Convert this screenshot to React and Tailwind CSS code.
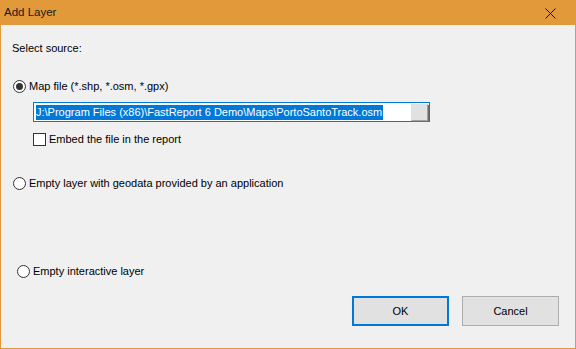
import React from 'react';

const Radio = ({ checked }) => (
  <span className="w-[13px] h-[13px] rounded-full border border-[#333333] bg-white flex items-center justify-center shrink-0">
    {checked && <span className="w-[7px] h-[7px] rounded-full bg-[#333333]" />}
  </span>
);

const App = () => {
  return (
    <div className="w-[576px] h-[349px] flex flex-col bg-[#e1993a] text-[11px] text-black" style={{ fontFamily: '"Liberation Sans", Arial, sans-serif' }}>
      {/* Title bar */}
      <div className="h-[25px] flex items-center justify-between pl-[4px] pr-[20px] shrink-0">
        <span className="text-[11.5px] text-[#1a1a1a] leading-none">Add Layer</span>
        <svg width="11" height="11" viewBox="0 0 11 11" className="mt-[1px]">
          <path d="M0.5 0.5 L10.5 10.5 M10.5 0.5 L0.5 10.5" stroke="#111" strokeWidth="1" />
        </svg>
      </div>

      {/* Body */}
      <div className="flex-1 mx-[1px] mb-[1px] bg-[#f0f0f0] flex flex-col">
        <div className="pl-[11px] pt-[16px] leading-[14px]">Select source:</div>

        <div className="flex items-center gap-[3px] pl-[12px] mt-[24px] h-[14px]">
          <Radio checked />
          <span>Map file (*.shp, *.osm, *.gpx)</span>
        </div>

        <div className="ml-[32px] mt-[9px] w-[397px] h-[20px] border border-[#0078d7] bg-white flex items-center pl-[2px] pr-[1px]">
          <span className="bg-[#0078d7] text-white h-[15px] leading-[15px] pr-[1px] whitespace-nowrap">J:\Program Files (x86)\FastReport 6 Demo\Maps\PortoSantoTrack.osm</span>
          <span className="ml-auto w-[17px] h-[17px] bg-[#e1e1e1] border border-[#e1e1e1] border-r-[#a0a0a0] border-b-[#a0a0a0] shadow-[1px_1px_0_#6d6d6d]" />
        </div>

        <div className="flex items-center gap-[3px] pl-[32px] mt-[10px] h-[14px]">
          <span className="w-[13px] h-[13px] border border-[#333333] bg-white shrink-0" />
          <span>Embed the file in the report</span>
        </div>

        <div className="flex items-center gap-[3px] pl-[12px] mt-[30px] h-[14px]">
          <Radio />
          <span>Empty layer with geodata provided by an application</span>
        </div>

        <div className="flex items-center gap-[3px] pl-[16px] mt-[74px] h-[14px]">
          <Radio />
          <span>Empty interactive layer</span>
        </div>

        <div className="flex justify-end gap-[13px] pr-[16px] mt-[18px]">
          <button className="w-[97px] h-[30px] border-2 border-[#0078d7] bg-[#e1e1e1] text-[11px]">OK</button>
          <button className="w-[97px] h-[30px] border border-[#adadad] bg-[#e1e1e1] text-[11px]">Cancel</button>
        </div>
      </div>
    </div>
  );
};

export default App;
